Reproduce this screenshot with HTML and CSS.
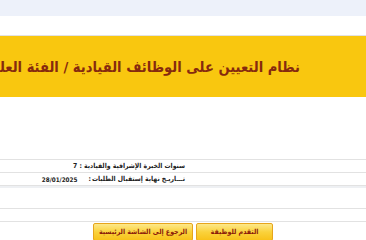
FILE: index.html
```html
<!DOCTYPE html>
<html lang="ar" dir="rtl">
<head>
<meta charset="utf-8">
<link rel="stylesheet" href="styles.css">
</head>
<body>
<div class="topbar"></div>
<div class="spacer"></div>
<div class="title-box">
  <h1 class="title">نظام التعيين على الوظائف القيادية / الفئة العليا</h1>
</div>
<div class="blank"></div>
<div class="rows">
  <div class="row"><span class="label">سنوات الخبرة الإشرافية والقيادية : 7</span></div>
  <div class="row"><span class="label">تـــاريـخ نهاية إستقبال الطلبات</span><span class="colon">:</span><span class="date">28/01/2025</span></div>
  <div class="band"></div>
  <div class="row empty"></div>
  <div class="row thin"></div>
</div>
<div class="actions">
  <button class="btn btn-apply">التقدم للوظيفة</button>
  <button class="btn btn-back">الرجوع إلى الشاشة الرئيسية</button>
</div>
</body>
</html>
```
FILE: styles.css
```css
* { box-sizing: border-box; }
html, body { margin: 0; padding: 0; background: #fff; overflow: hidden; }
body { width: 366px; height: 240px; font-family: "DejaVu Sans Condensed", "DejaVu Sans", sans-serif; }
.topbar { height: 16px; background: #edf1fa; }
.spacer { height: 20px; border-bottom: 1px solid #e2e2e2; }
.title-box { height: 61px; background: #f9c70f; display: flex; align-items: center; padding-right: 66px; overflow: hidden; white-space: nowrap; }
.title { margin: 0; font-size: 14.6px; font-weight: bold; color: #862a0e; white-space: nowrap; }
.blank { height: 62px; }
.rows { border-top: 1px solid #e2e2e2; }
.row { height: 13px; border-bottom: 1px solid #e2e2e2; display: flex; align-items: center; padding-right: 181px; font-size: 6.8px; font-weight: bold; color: #222; white-space: nowrap; }
.colon { margin-right: 1px; }
.date { margin-right: 11px; font-size: 6.3px; }
.band { height: 2px; background: #eef0f3; }
.row.empty { height: 21px; }
.row.thin { height: 13px; }
.actions { display: flex; justify-content: center; gap: 3px; padding-top: 1px; }
.btn { font-family: "DejaVu Sans Condensed", "DejaVu Sans", sans-serif; font-size: 7px; font-weight: bold; color: #8b1a0a; height: 18px; padding: 0 4px; white-space: nowrap; border: 1px solid #e6a51c; border-radius: 2px; background: linear-gradient(#fde88a, #fad23c 50%, #f8c21a); }
.btn-apply { width: 77px; }
.btn-back { width: 100px; }
```
